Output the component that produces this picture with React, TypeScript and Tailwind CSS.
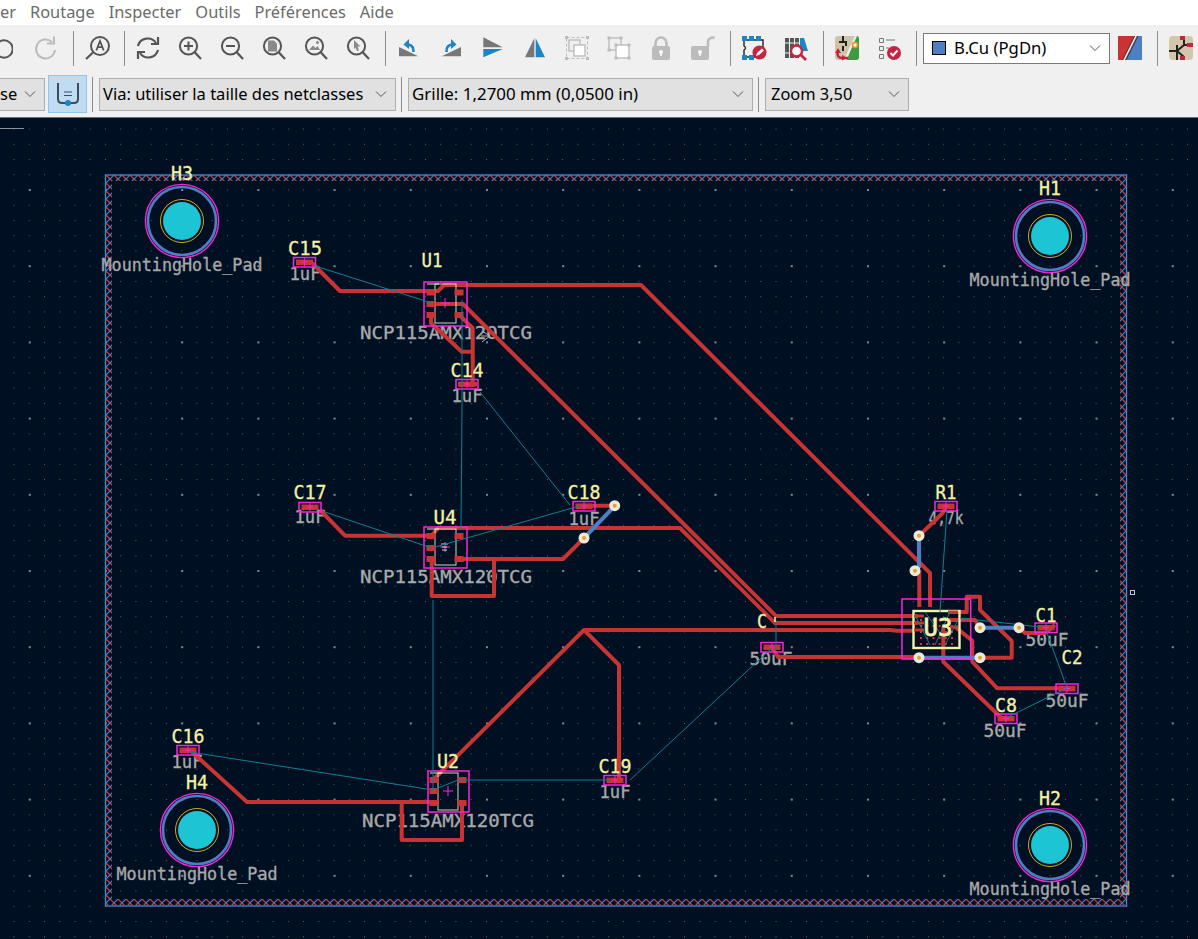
import React from 'react';

const RED = '#c83434';
const BLUE = '#4d7fc4';
const MAGENTA = '#ff22dc';
const CYAN = '#0f7f92';
const YELLOW = '#f4f2a4';
const GRAY = '#a9a9a9';
const ICON = '#555555';
const OFF = '#bcbcbc';
const IBLUE = '#1d84c6';

const Icon: React.FC<{ children: React.ReactNode }> = ({ children }) => (
  <div className="w-[42px] h-[26px] shrink-0 flex justify-center">
    <svg width="26" height="26" viewBox="0 0 26 26" fill="none">{children}</svg>
  </div>
);

const Sep: React.FC = () => <div className="w-px h-[35px] bg-[#8c8c8c] ml-[6px] mr-[2px] shrink-0" />;

const Chevron: React.FC = () => (
  <svg width="12" height="8" viewBox="0 0 12 8" fill="none" className="shrink-0">
    <path d="M1 1.5 6 6.5 11 1.5" stroke="#555" strokeWidth="1" />
  </svg>
);

const Combo: React.FC<{ text: string; cls: string; textCls: string }> = ({ text, cls, textCls }) => (
  <div className={`${cls} h-[33px] shrink-0 flex items-center justify-between pr-[8px] bg-[#e1e1e1] border border-[#adadad] text-black whitespace-nowrap overflow-hidden`}>
    <span className={textCls}>{text}</span>
    <Chevron />
  </div>
);

const Magnifier: React.FC<{ children?: React.ReactNode }> = ({ children }) => (
  <>
    <circle cx="11.5" cy="11" r="8.6" stroke={ICON} strokeWidth="2" />
    <path d="M17.5 17 24 24" stroke={ICON} strokeWidth="2.2" />
    {children}
  </>
);

const TopToolbar: React.FC = () => (
  <div className="h-[46px] bg-[#f0f0f0] flex items-center ml-[-21px] shrink-0">
    <Icon><circle cx="17" cy="14" r="8.7" stroke={ICON} strokeWidth="2" /></Icon>
    <div className="ml-[4px]">
      <Icon>
        <path d="M19 7A9.5 9.5 0 1 0 22 15" stroke={OFF} strokeWidth="2" />
        <path d="M21 1.5V8.5H14" stroke={OFF} strokeWidth="2" />
      </Icon>
    </div>
    <Sep />
    <Icon>
      <circle cx="16" cy="11" r="9" stroke={ICON} strokeWidth="2" />
      <path d="M9 17.5 2 24" stroke={ICON} strokeWidth="2.2" />
      <path d="M12.3 15.5 16 6 19.7 15.5M13.6 12.2H18.4" stroke={ICON} strokeWidth="1.8" />
    </Icon>
    <Sep />
    <Icon>
      <path d="M3 11A10 10 0 0 1 21 8" stroke={ICON} strokeWidth="2.2" />
      <path d="M23 2V9H16" stroke={ICON} strokeWidth="2.2" />
      <path d="M23 15A10 10 0 0 1 5 18" stroke={ICON} strokeWidth="2.2" />
      <path d="M3 24V17H10" stroke={ICON} strokeWidth="2.2" />
    </Icon>
    <Icon><Magnifier><path d="M7 11H16M11.5 6.5V15.5" stroke={ICON} strokeWidth="2" /></Magnifier></Icon>
    <Icon><Magnifier><path d="M7 11H16" stroke={ICON} strokeWidth="2" /></Magnifier></Icon>
    <Icon><Magnifier><path d="M7 5.5H13L16 8.5V16.5H7Z" fill="#8a8a8a" /></Magnifier></Icon>
    <Icon><Magnifier><path d="M6 15 10 10.5 12.5 13 14.5 11 17 15Z" fill="#8a8a8a" /><circle cx="14.5" cy="7.5" r="1.5" fill="#8a8a8a" /></Magnifier></Icon>
    <Icon><Magnifier><path d="M9 5 15.5 11.5H12.5L14 15.5 12 16 10.5 12.5 9 14Z" fill="#8a8a8a" /></Magnifier></Icon>
    <Sep />
    <Icon>
      <path d="M3 12 22.3 21.3H3Z" fill="#777" />
      <path d="M17.5 17Q18 10 11.5 9.5" stroke={IBLUE} strokeWidth="2.6" />
      <path d="M13 4 7.5 9.5 13 14Z" fill={IBLUE} />
    </Icon>
    <Icon>
      <path d="M3.7 21.3 23 12V21.3Z" fill="#777" />
      <path d="M8.5 17Q8 10 14.5 9.5" stroke={IBLUE} strokeWidth="2.6" />
      <path d="M13 4 18.5 9.5 13 14Z" fill={IBLUE} />
    </Icon>
    <Icon>
      <path d="M3.3 2.3 22.7 12.3H3.3Z" fill="#777" />
      <path d="M3.3 22.3 22.7 14H3.3Z" fill={IBLUE} />
    </Icon>
    <Icon>
      <path d="M3 22.3 12.3 3.3V22.3Z" fill="#777" />
      <path d="M13.7 3.3 23 22.3H13.7Z" fill={IBLUE} />
    </Icon>
    <Icon>
      <rect x="2.5" y="2.5" width="21" height="21" stroke={OFF} strokeDasharray="3 2" />
      <rect x="5" y="5" width="11" height="11" fill="#f0f0f0" stroke={OFF} strokeWidth="1.4" />
      <rect x="10" y="10" width="11" height="11" fill="#fff" stroke={OFF} strokeWidth="1.4" />
      <path d="M1 1h3v3H1zM22 1h3v3h-3zM1 22h3v3H1zM22 22h3v3h-3z" fill={OFF} />
    </Icon>
    <Icon>
      <rect x="3" y="3" width="12" height="12" stroke={OFF} strokeWidth="1.4" />
      <rect x="10" y="10" width="13" height="13" fill="#fff" stroke={OFF} strokeWidth="1.4" />
      <path d="M1.5 1.5h3v3h-3zM13.5 1.5h3v3h-3zM1.5 13.5h3v3h-3zM8.5 8.5h3v3h-3zM21.5 8.5h3v3h-3zM8.5 21.5h3v3h-3zM21.5 21.5h3v3h-3z" fill={OFF} />
    </Icon>
    <Icon>
      <path d="M7.5 12V8A5.5 5.5 0 0 1 18.5 8V12" stroke={OFF} strokeWidth="2.6" />
      <rect x="4" y="11" width="18" height="14" rx="2" fill={OFF} />
      <circle cx="13" cy="17" r="2" fill="#fff" />
      <rect x="12.2" y="17" width="1.6" height="4" fill="#fff" />
    </Icon>
    <Icon>
      <path d="M18 12V6.5A4.5 4.5 0 0 1 24.5 3" stroke={OFF} strokeWidth="2.6" />
      <rect x="1" y="11" width="18" height="14" rx="2" fill={OFF} />
      <circle cx="10" cy="17" r="2" fill="#fff" />
      <rect x="9.2" y="17" width="1.6" height="4" fill="#fff" />
    </Icon>
    <Sep />
    <Icon>
      <path d="M3 5H22V14M3 5V11Q6 13 3 15V22H14" stroke="#222" strokeWidth="1.4" />
      <path d="M1 1h5v5H1zM8 1h5v5H8zM15 1h5v5h-5zM1 20h5v5H1zM8 20h5v5H8z" fill={IBLUE} />
      <circle cx="18.5" cy="17.5" r="7" fill="#c4243f" />
      <path d="M15 21 16 18 21 13.5 23 15.5 18 20Z" fill="#fff" />
    </Icon>
    <Icon>
      <path d="M2 3h4v20H2zM7 3h4v20H7zM12 3h4v20h-4z" fill="#555" />
      <path d="M17 3h4l4 13h-8Z" fill={IBLUE} />
      <path d="M2 8h14M2 18h14" stroke="#eee" strokeWidth="1" />
      <circle cx="13.5" cy="16" r="5.5" fill="#fff" stroke="#c4243f" strokeWidth="2.4" />
      <path d="M18 20 23 25" stroke="#c4243f" strokeWidth="2.6" />
    </Icon>
    <Sep />
    <Icon>
      <rect x="1" y="1" width="24" height="24" rx="3" fill="#d0c4a8" />
      <path d="M25 4V22A3 3 0 0 1 22 25H13L22 1A3 3 0 0 1 25 4Z" fill="#3f9a3f" />
      <path d="M11 25 22 1" stroke="#eee" strokeWidth="2" />
      <path d="M9 1V7M5 7H12V11M9 11V16" stroke="#222" strokeWidth="2" />
      <circle cx="21" cy="10" r="2.5" fill="#fff" stroke="#e8921c" strokeWidth="1.6" />
      <path d="M14 23H8Q3 23 3.5 17" stroke="#c4243f" strokeWidth="2.4" />
      <path d="M1 18 4 13 7 18ZM8 20V25.5L13 23Z" fill="#c4243f" />
    </Icon>
    <Icon>
      <path d="M3.5 3.5h4v4h-4zM3.5 11.5h4v4h-4zM3.5 19.5h4v4h-4z" stroke="#777" />
      <path d="M10 5H19M10 13H13" stroke="#777" strokeWidth="1.2" />
      <circle cx="18" cy="18" r="7" fill="#c4243f" />
      <path d="M14.5 18 17 20.5 21.5 15.5" stroke="#fff" strokeWidth="2" />
    </Icon>
    <Sep />
    <div className="ml-[4px] w-[187px] h-[31px] shrink-0 bg-white border border-[#7a7a7a] flex items-center pl-[8px] pr-[8px] text-[16.7px] text-black">
      <div className="w-[14px] h-[14px] bg-[#4d7fc4] border border-black shrink-0" />
      <span className="ml-[8px] flex-1">B.Cu (PgDn)</span>
      <Chevron />
    </div>
    <div className="ml-[8px] shrink-0 flex">
      <svg width="24" height="24" viewBox="0 0 24 24">
        <rect width="24" height="24" fill="#c83434" />
        <path d="M24 0V24H7L19 0Z" fill="#4d7fc4" />
        <path d="M6 24 18 0" stroke="#fff" strokeWidth="1.4" />
        <path d="M8 24 20 0" stroke="#333" strokeWidth="1" />
        <path d="M4.5 24 16.5 0" stroke="#333" strokeWidth="0.7" />
      </svg>
    </div>
    <div className="w-px h-[35px] bg-[#8c8c8c] ml-[15px] mr-[11px] shrink-0" />
    <svg width="24" height="24" viewBox="0 0 24 24" fill="none" className="shrink-0">
      <rect width="24" height="24" rx="4" fill="#d3c6ab" />
      <path d="M8 24V9M8 15 15 9V3M8 15 15 21V24M15 9H20M0 15H8" stroke="#222" strokeWidth="2" />
      <path d="M11 0h5v4h-5zM18 7h6v4h-6zM11 20h5v4h-5z" fill="#c4243f" />
    </svg>
  </div>
);

const SecondToolbar: React.FC = () => (
  <div className="h-[46px] bg-[#f0f0f0] flex items-center shrink-0">
    <Combo text="se" cls="w-[45px] border-l-0" textCls="text-[16.5px]" />
    <div className="w-[39px] h-[38px] ml-[3px] shrink-0 bg-[#bfdcf3] border border-[#8fc6f0] flex items-center justify-center">
      <svg width="26" height="26" viewBox="0 0 26 26" fill="none">
        <path d="M3 2V18Q3 22 7 22H19Q23 22 23 18V2" stroke="#3f4c5c" strokeWidth="2" />
        <path d="M9 11H17M9 14.5H17" stroke="#3f4c5c" strokeWidth="1.2" />
        <circle cx="13" cy="22" r="3" fill={IBLUE} />
      </svg>
    </div>
    <div className="w-px h-[35px] bg-[#8c8c8c] ml-[5px] mr-[6px] shrink-0" />
    <Combo text="Via: utiliser la taille des netclasses" cls="w-[297px] pl-[3px]" textCls="text-[16.5px]" />
    <div className="w-px h-[35px] bg-[#8c8c8c] ml-[5px] mr-[6px] shrink-0" />
    <Combo text="Grille: 1,2700 mm (0,0500 in)" cls="w-[345px] pl-[3px]" textCls="text-[16.9px]" />
    <div className="w-px h-[35px] bg-[#8c8c8c] ml-[5px] mr-[6px] shrink-0" />
    <Combo text="Zoom 3,50" cls="w-[144px] pl-[5px]" textCls="text-[16.4px]" />
  </div>
);

// texte au format [contenu, x centre, ligne de base, largeur]
const values: [string, number, number, number][] = [
  ['MountingHole_Pad', 182, 271, 161],
  ['MountingHole_Pad', 1050, 286, 161],
  ['MountingHole_Pad', 197, 880, 161],
  ['MountingHole_Pad', 1050, 895, 161],
  ['NCP115AMX120TCG', 446, 339, 172],
  ['NCP115AMX120TCG', 446, 583, 172],
  ['NCP115AMX120TCG', 448, 827, 172],
  ['1uF', 305, 280, 31],
  ['1uF', 467, 402, 31],
  ['1uF', 310, 523, 31],
  ['1uF', 584, 525, 31],
  ['1uF', 187, 768, 31],
  ['1uF', 615, 798, 31],
  ['50uF', 771, 665, 43],
  ['4,7k', 946, 524, 35],
  ['50uF', 1047, 646, 43],
  ['50uF', 1067, 707, 43],
  ['50uF', 1005, 737, 43],
];

const refs: [string, number, number, number][] = [
  ['H3', 182, 180, 22], ['H1', 1050, 195, 22], ['H4', 197, 789, 22], ['H2', 1050, 805, 22],
  ['C15', 305, 255, 34], ['U1', 432, 267, 21], ['C14', 467, 377, 33], ['C17', 310, 499, 33],
  ['C18', 584, 499, 33], ['U4', 445, 524, 23], ['C', 762, 628, 10], ['R1', 946, 499, 21],
  ['C1', 1046, 622, 21], ['C2', 1072, 664, 21], ['C8', 1006, 712, 22], ['C16', 188, 743, 33],
  ['U2', 448, 768, 22], ['C19', 615, 773, 33],
];

const holes: [number, number][] = [[182, 221], [1050, 236], [197, 830], [1050, 845]];

const caps: [number, number][] = [
  [304.5, 262], [467, 384], [310, 507], [584, 506], [772, 647], [946, 506],
  [1046, 627.5], [1067, 688.5], [1006, 718.5], [188, 750], [615, 780],
];

const redTracks: string[] = [
  'M312 263 340 291H438L444 285H641L930 573V607',
  'M431 304H463L776 616H918',
  'M459 315 472.7 328V384M431 315V323L461.7 351.7H472.7M458 384H477',
  'M320 510 345 535.7H431.7L438 528H680L775 623H918',
  'M431.7 559V596H494V559M459 559H563L584 538',
  'M615 505.7H577',
  'M434 779 584 630H890L897 630.7H915M584 630 619 665V780',
  'M192 752 247 802H433M401.7 802V840H462V803',
  'M771.7 647 778 657H919',
  'M980 657.7H1011.7V641L980 610V596.7H966.7V612H948',
  'M946 507 942.7 513 919 535.7M919.3 570.7V607',
  'M948 620H975L980 627.7',
  'M1019 627.7 1025 633H1045L1055 625',
  'M955 626.7 972.3 640.7V661.7L997.3 688.3H1066.7',
  'M943.3 627V661.7L1001.7 718.3',
];

const blueTracks: string[] = [
  'M615 505.7 584 538',
  'M919 535.7V568',
  'M980 627.7H1019',
  'M919 657.7H980',
];

const ratsnest: string[] = [
  'M312 265 431.7 303',
  'M462 300V405L461 530',
  'M480 392 570 505',
  'M325 512 431.7 548 583 505',
  'M433 600V790',
  'M190 752 433 790 458 780H610',
  'M630 780 773 647',
  'M776 620V650',
  'M947 510 940 612',
  'M960 618 1040 627',
  'M1046 630 1067 688 1006 718',
  'M915 615 930 645M925 612 945 640M950 612 935 645M958 620 945 645',
];

const vias: [number, number][] = [
  [614.7, 505.7], [584, 538], [919, 535.7], [915, 570.7],
  [980, 627.7], [1019, 627.7], [919, 657.7], [980, 657.7],
];

const sots = [
  { x: 424, y: 282, w: 43, h: 44, sx: 435, sy: 284, sw: 21, sh: 39, lx: 431, rx: 459, ys: [292.5, 304, 315], cx: 445, cy: 303 },
  { x: 424, y: 527, w: 43, h: 41, sx: 435, sy: 529, sw: 21, sh: 36, lx: 431, rx: 459, ys: [536, 548, 559], cx: 445, cy: 547 },
  { x: 428, y: 771, w: 41, h: 41, sx: 438, sy: 773, sw: 20, sh: 37, lx: 434, rx: 462, ys: [780, 791, 803], cx: 448, cy: 791 },
];

const u3Dots: [number, number][] = [];
for (let i = 0; i < 6; i++) {
  for (let j = 0; j < 5; j++) {
    if (j === 2 && i > 1 && i < 4) continue;
    u3Dots.push([920 + i * 6.2, 619 + j * 6]);
  }
}

const Board: React.FC = () => (
  <svg width="1198" height="821" viewBox="0 118 1198 821" className="block">
    <defs>
      <pattern id="grid" x="120.2" y="189.5" width="15.24" height="15.24" patternUnits="userSpaceOnUse">
        <rect width="1" height="1" fill="#566270" />
      </pattern>
      <pattern id="gridMajor" x="105" y="189" width="76.2" height="76.2" patternUnits="userSpaceOnUse">
        <rect width="2" height="2" fill="#7d8690" />
      </pattern>
      <pattern id="hatch" x="106" y="175" width="8" height="8" patternUnits="userSpaceOnUse">
        <path d="M0 0 8 8" stroke={RED} strokeWidth="1.3" />
        <path d="M8 0 0 8" stroke={BLUE} strokeWidth="1.2" />
      </pattern>
    </defs>
    <rect x="0" y="118" width="1198" height="821" fill="#001023" />
    <rect x="0" y="118" width="1198" height="821" fill="url(#grid)" />
    <rect x="0" y="118" width="1198" height="821" fill="url(#gridMajor)" />
    <rect x="0" y="128" width="24" height="1" fill="#8a929c" />
    <rect x="1130.5" y="590.5" width="4" height="4" fill="#001023" stroke="#c8c8c8" />

    <path d="M106 175H1126V905H106ZM112 181V899H1120V181Z" fill="url(#hatch)" fillRule="evenodd" />
    <rect x="105.5" y="175" width="1021" height="731" fill="none" stroke={BLUE} strokeWidth="1.4" />

    {holes.map(([x, y]) => (
      <g key={`${x}-${y}`} fill="none">
        <circle cx={x} cy={y} r="36.6" stroke={MAGENTA} strokeWidth="1.4" />
        <circle cx={x} cy={y} r="34" stroke={BLUE} strokeWidth="2.6" />
        <circle cx={x} cy={y} r="21.5" stroke="#d8a820" strokeWidth="1" />
        <circle cx={x} cy={y} r="19" fill="#1cc4d4" />
      </g>
    ))}

    <g fontFamily="'DejaVu Sans Mono', monospace" fontSize="18" fill={GRAY} stroke={GRAY} strokeWidth="0.35" textAnchor="middle">
      {values.map(([t, x, y, w]) => (
        <text key={`${t}-${x}-${y}`} x={x} y={y} textLength={w} lengthAdjust="spacingAndGlyphs">{t}</text>
      ))}
    </g>

    <g fill="none" stroke={RED} strokeWidth="4" strokeLinejoin="round">
      {redTracks.map(d => <path key={d} d={d} />)}
    </g>
    <g fill="none" stroke={BLUE} strokeWidth="4">
      {blueTracks.map(d => <path key={d} d={d} />)}
    </g>

    {sots.map(s => (
      <g key={s.y}>
        <rect x={s.sx} y={s.sy} width={s.sw} height={s.sh} fill="none" stroke="#d8d6b8" strokeWidth="1" />
        <path d={`M${s.sx - 8} ${s.sy}H${s.sx + 4}`} stroke="#e8e6c8" strokeWidth="1" />
        {s.ys.map(py => <rect key={py} x={s.lx - 4.5} y={py - 3} width="9" height="6" fill={RED} />)}
        <rect x={s.rx - 4.5} y={s.ys[0] - 3} width="9" height="6" fill={RED} />
        <rect x={s.rx - 4.5} y={s.ys[2] - 3} width="9" height="6" fill={RED} />
        <rect x={s.x} y={s.y} width={s.w} height={s.h} fill="none" stroke={MAGENTA} strokeWidth="1.5" />
        <path d={`M${s.cx - 5} ${s.cy}H${s.cx + 5}M${s.cx} ${s.cy - 5}V${s.cy + 5}`} stroke={MAGENTA} strokeWidth="1" />
      </g>
    ))}
    <path d="M441 544H448M442 547H447M442 550H447" stroke="#d8d6b8" strokeWidth="1" />
    <path d="M482 331 490 336 482 342M481 336H490" stroke="#b0b0b0" strokeWidth="1" fill="none" />

    {caps.map(([x, y]) => (
      <g key={`${x}-${y}`}>
        <rect x={x - 8.5} y={y - 2.5} width="17" height="5.5" fill={RED} />
        <rect x={x - 11} y={y - 4.5} width="22" height="9.5" fill="none" stroke={MAGENTA} strokeWidth="1.5" />
        <path d={`M${x - 3} ${y}H${x + 3}M${x} ${y - 4}V${y + 4}`} stroke={MAGENTA} strokeWidth="0.9" />
      </g>
    ))}

    <rect x="902" y="599" width="68.7" height="60" fill="none" stroke={MAGENTA} strokeWidth="1.5" />
    <rect x="913.5" y="611" width="46" height="37" fill="none" stroke={YELLOW} strokeWidth="2.4" />
    {u3Dots.map(([x, y]) => <rect key={`${x}-${y}`} x={x} y={y} width="2" height="2" fill="#e0303a" />)}
    <path d="M914 616H924M914 623H924M914 630H924M948 612H958M950 620H958M950 627H958" stroke={RED} strokeWidth="3" />

    <g fill="none" stroke={CYAN} strokeWidth="1">
      {ratsnest.map(d => <path key={d} d={d} />)}
    </g>

    {vias.map(([x, y]) => (
      <g key={`${x}-${y}`}>
        <circle cx={x} cy={y} r="5.5" fill="#ece9dc" />
        <circle cx={x} cy={y} r="2" fill="#e0a526" />
      </g>
    ))}

    <g fontFamily="'DejaVu Sans Mono', monospace" fontSize="19" fill={YELLOW} stroke={YELLOW} strokeWidth="0.3" textAnchor="middle">
      {refs.map(([t, x, y, w]) => <text key={`${t}-${x}`} x={x} y={y} textLength={w} lengthAdjust="spacingAndGlyphs">{t}</text>)}
      <text x="938" y="636" fontSize="25" strokeWidth="0.8" textLength="29" lengthAdjust="spacingAndGlyphs">U3</text>
    </g>
    <path d="M775 617V622" stroke={YELLOW} strokeWidth="1.5" />
  </svg>
);

export default function App() {
  const menus = ['Routage', 'Inspecter', 'Outils', 'Préférences', 'Aide'];
  return (
    <div className="w-[1198px] h-[939px] overflow-hidden flex flex-col bg-[#001023] font-['Noto_Sans',sans-serif]">
      <div className="h-[25px] bg-white flex items-center gap-[14px] text-[16.4px] text-[#6a6a6a] shrink-0 whitespace-nowrap">
        <span className="w-[16px] text-right">er</span>
        {menus.map(m => <span key={m}>{m}</span>)}
      </div>
      <TopToolbar />
      <SecondToolbar />
      <div className="h-px bg-[#6a6f76] shrink-0" />
      <Board />
    </div>
  );
}
